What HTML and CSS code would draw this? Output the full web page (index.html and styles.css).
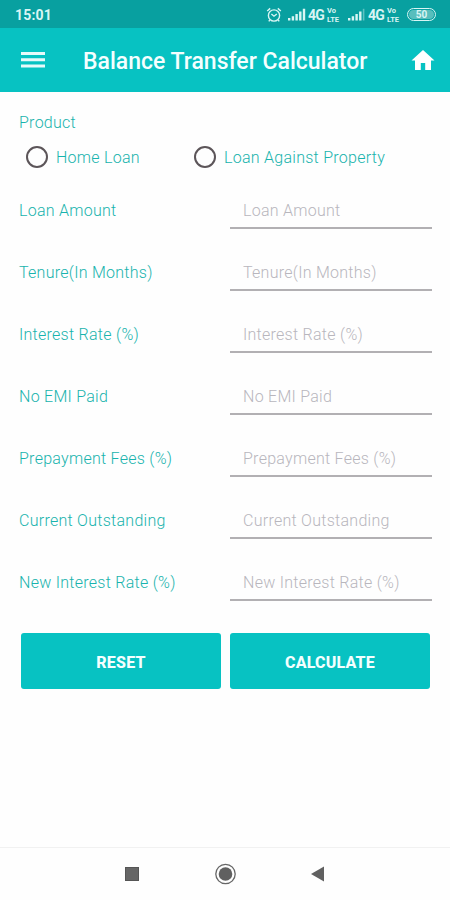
FILE: index.html
```html
<!DOCTYPE html>
<html lang="en">
<head>
    <meta charset="UTF-8">
    <meta name="viewport" content="width=device-width, initial-scale=1.0">
    <title>Balance Transfer Calculator</title>
    <link rel="stylesheet" href="styles.css">
</head>
<body>

    <!-- Status Bar -->
    <div class="status-bar">
        <span class="time">15:01</span>
        <div class="status-icons">
            <svg class="alarm" width="16" height="16" viewBox="0 0 16 16" fill="none" stroke="#d9f5f4" stroke-width="1.4">
                <circle cx="8" cy="8.5" r="5.6"/>
                <path d="M1.2 4 L4.2 1.4 M14.8 4 L11.8 1.4 M3.8 13 L2.8 14.4 M12.2 13 L13.2 14.4 M5.4 7 L8 9.2 L10.8 7"/>
            </svg>
            <svg class="signal" width="18" height="13" viewBox="0 0 18 13" fill="#d9f5f4">
                <path d="M0 10h2.4v2.5H0z M3.7 8.3h2.4v4.2H3.7z M7.4 6h2.4v6.5H7.4z M11.1 3.5h2.4v9h-2.4z M14.8 .8h2.4v11.7h-2.4z"/>
            </svg>
            <span class="network">4G</span>
            <span class="volte"><span>Vo</span><span>LTE</span></span>
            <svg class="signal" width="18" height="13" viewBox="0 0 18 13" fill="#d9f5f4">
                <path d="M0 10h2.4v2.5H0z M3.7 8.3h2.4v4.2H3.7z M7.4 6h2.4v6.5H7.4z M11.1 3.5h2.4v9h-2.4z"/>
                <path fill-opacity=".4" d="M14.8 .8h1.6v11.7h-1.6z"/>
            </svg>
            <span class="network">4G</span>
            <span class="volte"><span>Vo</span><span>LTE</span></span>
            <span class="battery"><span>50</span></span>
        </div>
    </div>

    <!-- Header -->
    <header class="app-bar">
        <svg class="menu-icon" width="24" height="16" viewBox="0 0 24 16" fill="#e6fafa">
            <path d="M0 0h24v2.9H0z M0 6.3h24v2.9H0z M0 12.6h24v2.9H0z"/>
        </svg>
        <h1>Balance Transfer Calculator</h1>
        <svg class="home-icon" width="24" height="20" viewBox="0 0 24 20" fill="#fff">
            <path d="M12 0 L23.5 10.4 H20 V20 H14.2 V13 H9.8 V20 H4 V10.4 H.5 Z"/>
        </svg>
    </header>

    <form class="calculator-form" id="calculatorForm">
        <p class="product-title">Product</p>
        <div class="product-options">
            <label><input type="radio" name="product" value="home">Home Loan</label>
            <label><input type="radio" name="product" value="property">Loan Against Property</label>
        </div>

        <div class="form-row">
            <label for="loanAmount">Loan Amount</label>
            <input type="text" id="loanAmount" placeholder="Loan Amount">
        </div>
        <div class="form-row">
            <label for="tenure">Tenure(In Months)</label>
            <input type="text" id="tenure" placeholder="Tenure(In Months)">
        </div>
        <div class="form-row">
            <label for="interestRate">Interest Rate (%)</label>
            <input type="text" id="interestRate" placeholder="Interest Rate (%)">
        </div>
        <div class="form-row">
            <label for="emiPaid">No EMI Paid</label>
            <input type="text" id="emiPaid" placeholder="No EMI Paid">
        </div>
        <div class="form-row">
            <label for="prepaymentFees">Prepayment Fees (%)</label>
            <input type="text" id="prepaymentFees" placeholder="Prepayment Fees (%)">
        </div>
        <div class="form-row">
            <label for="outstanding">Current Outstanding</label>
            <input type="text" id="outstanding" placeholder="Current Outstanding">
        </div>
        <div class="form-row">
            <label for="newRate">New Interest Rate (%)</label>
            <input type="text" id="newRate" placeholder="New Interest Rate (%)">
        </div>

        <div class="buttons">
            <button type="reset">RESET</button>
            <button type="button">CALCULATE</button>
        </div>
    </form>

    <!-- Navigation Bar -->
    <nav class="nav-bar">
        <svg width="14" height="14" viewBox="0 0 14 14">
            <rect x=".5" y=".5" width="13" height="13" fill="#666" stroke="#555"/>
        </svg>
        <svg width="22" height="22" viewBox="0 0 22 22">
            <circle cx="11.5" cy="11" r="9.7" fill="none" stroke="#666" stroke-width="1.3"/>
            <circle cx="11.5" cy="11" r="6.8" fill="#606060"/>
        </svg>
        <svg width="14" height="16" viewBox="0 0 14 16">
            <path d="M0 8 L13 .5 V15.5 Z" fill="#606060"/>
        </svg>
    </nav>

</body>
</html>
```

FILE: styles.css
```css
* {
    box-sizing: border-box;
}
body {
    margin: 0;
    height: 900px;
    display: flex;
    flex-direction: column;
    font-family: Roboto, sans-serif;
    background-color: #fefefe;
    overflow: hidden;
}
.status-bar {
    height: 28px;
    display: flex;
    justify-content: space-between;
    align-items: center;
    padding: 1px 14px 0 15px;
    background-color: #08a0a0;
    color: #d9f5f4;
}
.time {
    font-size: 14px;
    font-weight: bold;
    letter-spacing: 0.2px;
}
.status-icons {
    display: flex;
    align-items: center;
}
.signal {
    margin-left: 6px;
}
.network {
    width: 17px;
    margin-left: 2px;
    font-size: 14px;
    font-weight: bold;
    letter-spacing: -0.7px;
}
.volte {
    width: 15px;
    margin-left: 2px;
    display: flex;
    flex-direction: column;
    font-size: 7.5px;
    font-weight: bold;
    line-height: 9px;
}
.battery {
    width: 29px;
    height: 13px;
    margin-left: 5px;
    padding: 1px;
    border: 1px solid #d9f5f4;
    border-radius: 7px;
}
.battery span {
    display: block;
    height: 9px;
    border-radius: 5px;
    background-color: #58bebd;
    font-size: 10px;
    font-weight: bold;
    line-height: 9px;
    text-align: center;
}
.app-bar {
    height: 64px;
    display: flex;
    align-items: center;
    padding: 0 15px 0 21px;
    background-color: #07c2c2;
}
.app-bar h1 {
    flex: 1;
    margin: 3px 0 0 38px;
    color: #f4ffff;
    font-size: 23px;
    font-weight: 500;
    white-space: nowrap;
}
.calculator-form {
    flex: 1;
    padding: 20px 18px 0 19px;
    color: #18b3ad;
    font-size: 16px;
    font-weight: 300;
    letter-spacing: 0.27px;
}
.product-title {
    margin: 0;
    line-height: 21px;
}
.product-options {
    height: 46px;
    display: grid;
    grid-template-columns: 168px 1fr;
    padding-left: 7px;
}
.product-options label {
    height: 48px;
    display: flex;
    align-items: center;
}
.product-options input {
    appearance: none;
    width: 22px;
    height: 22px;
    margin: 0 8px 0 0;
    border: 2px solid #5c5559;
    border-radius: 50%;
}
.form-row {
    height: 62px;
    display: grid;
    grid-template-columns: 211px 202px;
    align-items: center;
}
.form-row input {
    width: 100%;
    height: 36px;
    margin: 2px 0 0;
    padding: 0 13px;
    border: none;
    border-bottom: 2px solid #b2b0b3;
    background: transparent;
    font: inherit;
    letter-spacing: inherit;
}
.form-row input::placeholder {
    color: #b8b6bd;
    opacity: 1;
}
.buttons {
    display: grid;
    grid-template-columns: 200px 200px;
    gap: 9px;
    padding: 20px 0 0 2px;
}
.buttons button {
    height: 56px;
    padding: 2px 0 0;
    border: none;
    border-radius: 3px;
    background-color: #07c2c2;
    color: #f4ffff;
    font-family: Roboto, sans-serif;
    font-size: 16px;
    font-weight: 800;
    letter-spacing: 0.2px;
}
.nav-bar {
    height: 53px;
    display: flex;
    align-items: center;
    justify-content: space-between;
    padding: 0 125px;
    border-top: 1px solid #f1f1f1;
}
```
